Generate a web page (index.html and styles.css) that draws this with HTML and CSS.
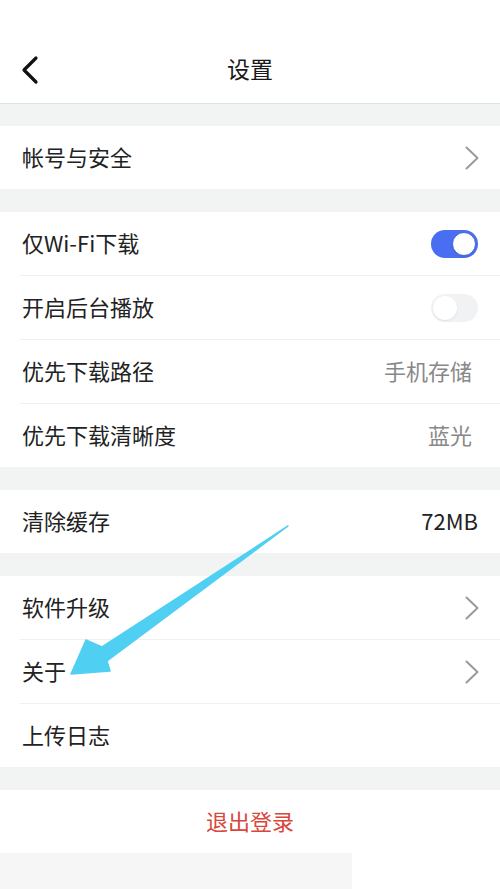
FILE: index.html
```html
<!DOCTYPE html>
<html lang="zh-CN">
  <head>
    <meta charset="UTF-8" />
    <meta name="viewport" content="width=device-width, initial-scale=1.0" />
    <title>设置</title>
    <link rel="stylesheet" href="styles.css">
  </head>
  <body>
    <div class="page">
      <div class="header">
        <svg class="back" width="20" height="30" viewBox="0 0 20 30">
          <path d="M16 3 L4 15 L16 27" fill="none" stroke="#111" stroke-width="3.2" stroke-linecap="round" stroke-linejoin="round" />
        </svg>
        <div class="title">设置</div>
      </div>

      <div class="group">
        <div class="row">
          <span class="label">帐号与安全</span>
          <svg class="chevron" width="14" height="24" viewBox="0 0 14 24"><path d="M1.5 1.5 L12.5 12 L1.5 22.5" /></svg>
        </div>
      </div>

      <div class="group">
        <div class="row">
          <span class="label">仅Wi-Fi下载</span>
          <span class="switch on"><span class="knob"></span></span>
        </div>
        <div class="row">
          <span class="label">开启后台播放</span>
          <span class="switch"><span class="knob"></span></span>
        </div>
        <div class="row">
          <span class="label">优先下载路径</span>
          <span class="value">手机存储</span>
        </div>
        <div class="row">
          <span class="label">优先下载清晰度</span>
          <span class="value">蓝光</span>
        </div>
      </div>

      <div class="group">
        <div class="row">
          <span class="label">清除缓存</span>
          <span class="value dark">72MB</span>
        </div>
      </div>

      <div class="group">
        <div class="row">
          <span class="label">软件升级</span>
          <svg class="chevron" width="14" height="24" viewBox="0 0 14 24"><path d="M1.5 1.5 L12.5 12 L1.5 22.5" /></svg>
        </div>
        <div class="row">
          <span class="label">关于</span>
          <svg class="chevron" width="14" height="24" viewBox="0 0 14 24"><path d="M1.5 1.5 L12.5 12 L1.5 22.5" /></svg>
        </div>
        <div class="row">
          <span class="label">上传日志</span>
        </div>
      </div>

      <div class="group">
        <div class="row logout">退出登录</div>
      </div>

      <div class="footer">
        <div class="footer-block"></div>
      </div>

      <!-- annotation arrow drawn over the list -->
      <svg class="pointer" width="500" height="889" viewBox="0 0 500 889">
        <path d="M288 526 L102 647 L86 640 L71 674 L110 671 L107 661 Z" fill="#4fd0f2" stroke="#4fd0f2" stroke-width="1.5" stroke-linejoin="round" />
      </svg>
    </div>
  </body>
</html>
```

FILE: styles.css
```css
* {
  margin: 0;
  padding: 0;
  box-sizing: border-box;
}

body {
  background-color: #f2f3f3;
  font-family: "Noto Sans CJK SC", "Noto Sans", sans-serif;
  color: #222;
}

.page {
  position: relative;
  width: 500px;
  height: 889px;
  overflow: hidden;
}

.header {
  height: 104px;
  background-color: #fff;
  border-bottom: 1px solid #e2e2e2;
  display: flex;
  align-items: flex-end;
  justify-content: center;
  padding-bottom: 20px;
  position: relative;
}

.back {
  position: absolute;
  left: 20px;
  top: 55px;
}

.title {
  font-size: 23px;
  line-height: 30px;
  color: #1a1a1a;
}

.group {
  margin-top: 22px;
  background-color: #fff;
}

.group + .group {
  margin-top: 23px;
}

.row {
  height: 63px;
  display: flex;
  align-items: center;
  justify-content: space-between;
  padding: 0 22px 3px;
  font-size: 22px;
}

.row + .row {
  height: 64px;
  border-top: 1px solid #f0f0f0;
  margin-left: 20px;
  padding-left: 2px;
}

.label {
  color: #222;
}

.value {
  color: #888;
  padding-right: 6px;
}

.value.dark {
  color: #222;
  padding-right: 0;
}

.chevron {
  fill: none;
  stroke: #9a9a9a;
  stroke-width: 2;
  stroke-linecap: round;
  stroke-linejoin: round;
  margin-right: -1px;
  margin-top: 3px;
}

.switch {
  width: 47px;
  height: 28px;
  border-radius: 14px;
  background-color: #f1f2f4;
  display: flex;
  align-items: center;
  padding: 0 2px;
  margin-top: 3px;
}

.switch .knob {
  width: 24px;
  height: 24px;
  border-radius: 50%;
  background-color: #fff;
  box-shadow: 0 1px 2px rgba(0, 0, 0, 0.08);
}

.switch.on {
  background-color: #4a6ef2;
  justify-content: flex-end;
}

.switch.on .knob {
  border: 1px solid #4263d8;
}

.logout {
  justify-content: center;
  color: #d8473e;
}

.footer {
  height: 36px;
  background-color: #fff;
}

.footer-block {
  width: 352px;
  height: 36px;
  background-color: #f6f6f6;
}

.pointer {
  position: absolute;
  left: 0;
  top: 0;
  pointer-events: none;
}
```
